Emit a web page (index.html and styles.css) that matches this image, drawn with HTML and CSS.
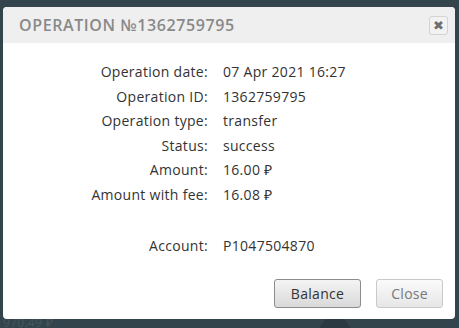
FILE: index.html
```html
<!DOCTYPE html>
<html lang="en">
<head>
	<meta charset="UTF-8">
	<title>Operation</title>
	<link rel="stylesheet" href="styles.css">
</head>
<body>
	<div id="modal">
		<div class="head">
			<span class="title">OPERATION №1362759795</span>
			<a class="x" href="#close">&#10006;</a>
		</div>
		<div class="info">
			<span class="lbl">Operation date:</span><span>07 Apr 2021 16:27</span>
			<span class="lbl">Operation ID:</span><span>1362759795</span>
			<span class="lbl">Operation type:</span><span>transfer</span>
			<span class="lbl">Status:</span><span>success</span>
			<span class="lbl">Amount:</span><span>16.00 ₽</span>
			<span class="lbl">Amount with fee:</span><span>16.08 ₽</span>
			<span class="lbl gap">Account:</span><span class="gap">P1047504870</span>
		</div>
		<div class="foot">
			<a class="btn dark" href="#balance">Balance</a>
			<a class="btn" href="#close">Close</a>
		</div>
	</div>
	<div class="under">
		<span class="sum">970.49 ₽</span>
		<span class="dot"></span>
	</div>
</body>
</html>
```

FILE: styles.css
```css
*{
	margin: 0;
	padding: 0;
	text-decoration: none;
}
html, body{
	height: 328px;
	overflow: hidden;
}
body{
	background: #34444c;
	padding: 7px 4px 0 3px;
	box-sizing: border-box;
	font-family: "Open Sans", "Liberation Sans", sans-serif;
	font-size: 14px;
	letter-spacing: 0.3px;
	color: #333;
}
#modal{
	width: 452px;
	height: 312px;
	background: #fff;
	border-radius: 4px;
	overflow: hidden;
	display: flex;
	flex-direction: column;
}
#modal .head{
	height: 36px;
	background: #efefef;
	display: flex;
	align-items: center;
	justify-content: space-between;
	padding: 0 7px 0 16px;
}
#modal .title{
	font-size: 16px;
	font-weight: 600;
	letter-spacing: 0.6px;
	color: #898989;
}
#modal .x{
	width: 17px;
	height: 17px;
	border: 1px solid #d3d3d3;
	border-radius: 3px;
	background: #f2f2f2;
	color: #6e6e6e;
	font-size: 13px;
	line-height: 17px;
	text-align: center;
	font-family: "DejaVu Sans", sans-serif;
	font-weight: bold;
	letter-spacing: 0;
}
#modal .info{
	display: grid;
	grid-template-columns: 205px 1fr;
	column-gap: 15px;
	line-height: 24.6px;
	padding-top: 17px;
	flex: 1;
	align-content: start;
}
#modal .lbl{
	text-align: right;
}
#modal .gap{
	margin-top: 26px;
}
#modal .foot{
	display: flex;
	justify-content: flex-end;
	gap: 15px;
	padding: 0 12px 11px 0;
}
.btn{
	height: 27px;
	line-height: 27px;
	padding: 0 14px;
	border: 1px solid #c9c9c9;
	border-radius: 3px;
	background: linear-gradient(#fbfbfb, #e6e6e6);
	color: #777;
	font-size: 14px;
}
.btn.dark{
	padding: 0 16px;
	border-color: #8c8c8c;
	background: linear-gradient(#f4f4f4, #d9d9d9);
	color: #333;
}
.under{
	display: flex;
	align-items: flex-start;
	height: 9px;
	overflow: hidden;
}
.sum{
	color: #46565e;
	font-size: 12px;
	line-height: 14px;
	margin-top: -3px;
}
.dot{
	width: 32px;
	height: 32px;
	border-radius: 16px;
	background: #2b3a42;
	margin-left: 266px;
	margin-top: -2px;
}
```
